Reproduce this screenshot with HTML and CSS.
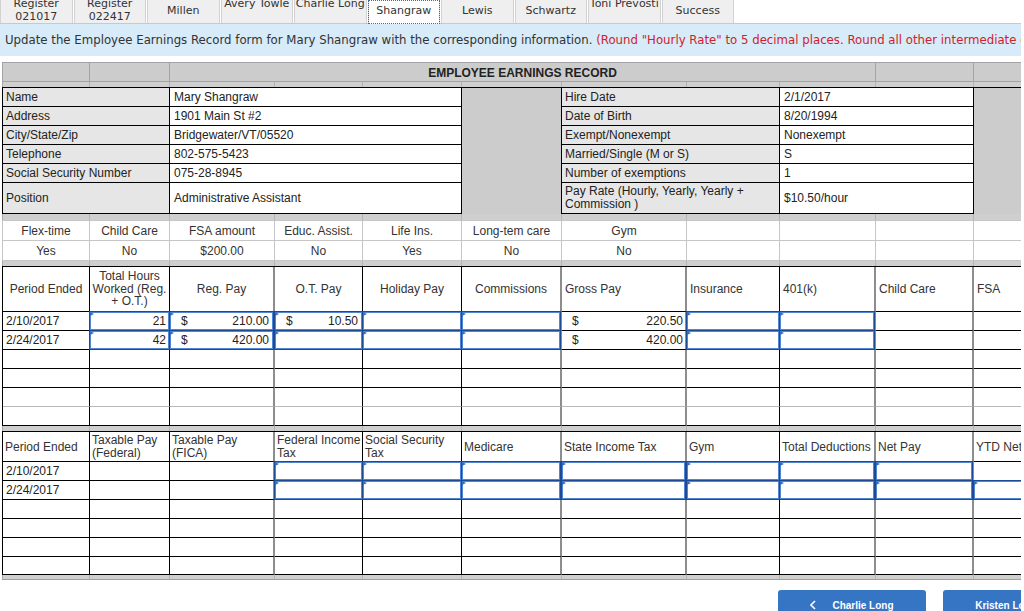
FILE: index.html
```html
<!DOCTYPE html>
<html lang="en">
<head>
<meta charset="utf-8">
<title>Employee Earnings Record</title>
<link rel="stylesheet" href="styles.css">
</head>
<body>
<div class="frame">
  <nav class="tabs">
    <div class="tab top"><span>Register<br>021017</span></div>
    <div class="tab top"><span>Register<br>022417</span></div>
    <div class="tab"><span>Millen</span></div>
    <div class="tab top"><span>Avery Towle</span></div>
    <div class="tab top"><span>Charlie Long</span></div>
    <div class="tab active"><span>Shangraw</span></div>
    <div class="tab"><span>Lewis</span></div>
    <div class="tab"><span>Schwartz</span></div>
    <div class="tab top"><span>Toni Prevosti</span></div>
    <div class="tab"><span>Success</span></div>
  </nav>

  <div class="note">Update the Employee Earnings Record form for Mary Shangraw with the corresponding information. <span class="warn">(Round "Hourly Rate" to 5 decimal places. Round all other intermediate calculations to 2 decimal places.)</span></div>

  <div class="sheet">
    <div class="grid title">
      <div class="cell"></div>
      <div class="cell"></div>
      <div class="cell head">EMPLOYEE EARNINGS RECORD</div>
      <div class="cell"></div>
      <div class="cell"></div>
    </div>

    <div class="grid band">
      <div class="cell"></div><div class="cell"></div><div class="cell"></div><div class="cell"></div><div class="cell"></div><div class="cell"></div><div class="cell"></div><div class="cell"></div><div class="cell"></div><div class="cell"></div><div class="cell"></div>
    </div>

    <div class="grid info">
      <div class="cell gapcol gap-f"></div>
      <div class="cell gapcol gap-k"></div>

      <div class="cell lab c-ab">Name</div>
      <div class="cell val c-ce">Mary Shangraw</div>
      <div class="cell lab c-gh">Hire Date</div>
      <div class="cell val c-ij">2/1/2017</div>

      <div class="cell lab c-ab">Address</div>
      <div class="cell val c-ce">1901 Main St #2</div>
      <div class="cell lab c-gh">Date of Birth</div>
      <div class="cell val c-ij">8/20/1994</div>

      <div class="cell lab c-ab">City/State/Zip</div>
      <div class="cell val c-ce">Bridgewater/VT/05520</div>
      <div class="cell lab c-gh">Exempt/Nonexempt</div>
      <div class="cell val c-ij">Nonexempt</div>

      <div class="cell lab c-ab">Telephone</div>
      <div class="cell val c-ce">802-575-5423</div>
      <div class="cell lab c-gh">Married/Single (M or S)</div>
      <div class="cell val c-ij">S</div>

      <div class="cell lab c-ab">Social Security Number</div>
      <div class="cell val c-ce">075-28-8945</div>
      <div class="cell lab c-gh">Number of exemptions</div>
      <div class="cell val c-ij">1</div>

      <div class="cell lab c-ab">Position</div>
      <div class="cell val c-ce">Administrative Assistant</div>
      <div class="cell lab c-gh wrap">Pay Rate (Hourly, Yearly, Yearly + Commission )</div>
      <div class="cell val c-ij">$10.50/hour</div>
    </div>

    <div class="grid band b6">
      <div class="cell"></div><div class="cell"></div><div class="cell"></div><div class="cell"></div><div class="cell"></div><div class="cell"></div><div class="cell"></div><div class="cell"></div><div class="cell"></div><div class="cell"></div><div class="cell"></div>
    </div>

    <div class="grid opts">
      <div class="cell">Flex-time</div>
      <div class="cell">Child Care</div>
      <div class="cell">FSA amount</div>
      <div class="cell">Educ. Assist.</div>
      <div class="cell">Life Ins.</div>
      <div class="cell">Long-tem care</div>
      <div class="cell">Gym</div>
      <div class="cell"></div><div class="cell"></div><div class="cell"></div><div class="cell"></div>

      <div class="cell">Yes</div>
      <div class="cell">No</div>
      <div class="cell">$200.00</div>
      <div class="cell">No</div>
      <div class="cell">Yes</div>
      <div class="cell">No</div>
      <div class="cell">No</div>
      <div class="cell"></div><div class="cell"></div><div class="cell"></div><div class="cell"></div>
    </div>

    <div class="grid band">
      <div class="cell"></div><div class="cell"></div><div class="cell"></div><div class="cell"></div><div class="cell"></div><div class="cell"></div><div class="cell"></div><div class="cell"></div><div class="cell"></div><div class="cell"></div><div class="cell"></div>
    </div>

    <div class="grid pay pay1">
      <div class="tr hdr">
        <div class="cell hc">Period Ended</div>
        <div class="cell hc wrap tight">Total Hours Worked (Reg. + O.T.)</div>
        <div class="cell hc">Reg. Pay</div>
        <div class="cell hc">O.T. Pay</div>
        <div class="cell hc">Holiday Pay</div>
        <div class="cell hc">Commissions</div>
        <div class="cell">Gross Pay</div>
        <div class="cell">Insurance</div>
        <div class="cell">401(k)</div>
        <div class="cell">Child Care</div>
        <div class="cell">FSA</div>
      </div>
      <div class="tr">
        <div class="cell">2/10/2017</div>
        <div class="cell inp num">21</div>
        <div class="cell inp money"><span>$</span><span>210.00</span></div>
        <div class="cell inp money"><span>$</span><span>10.50</span></div>
        <div class="cell inp"></div>
        <div class="cell inp"></div>
        <div class="cell money plain"><span>$</span><span>220.50</span></div>
        <div class="cell inp"></div>
        <div class="cell inp"></div>
        <div class="cell"></div>
        <div class="cell"></div>
      </div>
      <div class="tr">
        <div class="cell">2/24/2017</div>
        <div class="cell inp num">42</div>
        <div class="cell inp money"><span>$</span><span>420.00</span></div>
        <div class="cell inp"></div>
        <div class="cell inp"></div>
        <div class="cell inp"></div>
        <div class="cell money plain"><span>$</span><span>420.00</span></div>
        <div class="cell inp"></div>
        <div class="cell inp"></div>
        <div class="cell"></div>
        <div class="cell"></div>
      </div>
      <div class="tr">
        <div class="cell"></div><div class="cell"></div><div class="cell"></div><div class="cell"></div><div class="cell"></div><div class="cell"></div><div class="cell"></div><div class="cell"></div><div class="cell"></div><div class="cell"></div><div class="cell"></div>
      </div>
      <div class="tr">
        <div class="cell"></div><div class="cell"></div><div class="cell"></div><div class="cell"></div><div class="cell"></div><div class="cell"></div><div class="cell"></div><div class="cell"></div><div class="cell"></div><div class="cell"></div><div class="cell"></div>
      </div>
      <div class="tr soft">
        <div class="cell"></div><div class="cell"></div><div class="cell"></div><div class="cell"></div><div class="cell"></div><div class="cell"></div><div class="cell"></div><div class="cell"></div><div class="cell"></div><div class="cell"></div><div class="cell"></div>
      </div>
      <div class="tr">
        <div class="cell"></div><div class="cell"></div><div class="cell"></div><div class="cell"></div><div class="cell"></div><div class="cell"></div><div class="cell"></div><div class="cell"></div><div class="cell"></div><div class="cell"></div><div class="cell"></div>
      </div>
    </div>

    <div class="grid band">
      <div class="cell"></div><div class="cell"></div><div class="cell"></div><div class="cell"></div><div class="cell"></div><div class="cell"></div><div class="cell"></div><div class="cell"></div><div class="cell"></div><div class="cell"></div><div class="cell"></div>
    </div>

    <div class="grid pay pay2">
      <div class="tr hdr2">
        <div class="cell">Period Ended</div>
        <div class="cell wrap">Taxable Pay (Federal)</div>
        <div class="cell wrap">Taxable Pay (FICA)</div>
        <div class="cell wrap">Federal Income Tax</div>
        <div class="cell wrap">Social Security Tax</div>
        <div class="cell">Medicare</div>
        <div class="cell">State Income Tax</div>
        <div class="cell">Gym</div>
        <div class="cell">Total Deductions</div>
        <div class="cell">Net Pay</div>
        <div class="cell">YTD Net Pay</div>
      </div>
      <div class="tr">
        <div class="cell">2/10/2017</div>
        <div class="cell"></div>
        <div class="cell"></div>
        <div class="cell inp"></div>
        <div class="cell inp"></div>
        <div class="cell inp"></div>
        <div class="cell inp"></div>
        <div class="cell inp"></div>
        <div class="cell inp"></div>
        <div class="cell inp"></div>
        <div class="cell"></div>
      </div>
      <div class="tr">
        <div class="cell">2/24/2017</div>
        <div class="cell"></div>
        <div class="cell"></div>
        <div class="cell inp"></div>
        <div class="cell inp"></div>
        <div class="cell inp"></div>
        <div class="cell inp"></div>
        <div class="cell inp"></div>
        <div class="cell inp"></div>
        <div class="cell inp"></div>
        <div class="cell inp"></div>
      </div>
      <div class="tr">
        <div class="cell"></div><div class="cell"></div><div class="cell"></div><div class="cell"></div><div class="cell"></div><div class="cell"></div><div class="cell"></div><div class="cell"></div><div class="cell"></div><div class="cell"></div><div class="cell"></div>
      </div>
      <div class="tr">
        <div class="cell"></div><div class="cell"></div><div class="cell"></div><div class="cell"></div><div class="cell"></div><div class="cell"></div><div class="cell"></div><div class="cell"></div><div class="cell"></div><div class="cell"></div><div class="cell"></div>
      </div>
      <div class="tr">
        <div class="cell"></div><div class="cell"></div><div class="cell"></div><div class="cell"></div><div class="cell"></div><div class="cell"></div><div class="cell"></div><div class="cell"></div><div class="cell"></div><div class="cell"></div><div class="cell"></div>
      </div>
      <div class="tr">
        <div class="cell"></div><div class="cell"></div><div class="cell"></div><div class="cell"></div><div class="cell"></div><div class="cell"></div><div class="cell"></div><div class="cell"></div><div class="cell"></div><div class="cell"></div><div class="cell"></div>
      </div>
    </div>

    <div class="grid band last">
      <div class="cell"></div><div class="cell"></div><div class="cell"></div><div class="cell"></div><div class="cell"></div><div class="cell"></div><div class="cell"></div><div class="cell"></div><div class="cell"></div><div class="cell"></div><div class="cell"></div>
    </div>
  </div>

  <div class="nav">
    <div class="btn"><svg class="chev" width="6" height="10" viewBox="0 0 6 10"><polyline points="5,1 1,5 5,9" fill="none" stroke="#fff" stroke-width="1.6"/></svg><span>Charlie Long</span></div>
    <div class="btn"><span>Kristen Long</span><svg class="chev" width="6" height="10" viewBox="0 0 6 10"><polyline points="1,1 5,5 1,9" fill="none" stroke="#fff" stroke-width="1.6"/></svg></div>
  </div>
</div>
</body>
</html>
```

FILE: styles.css
```css
* { box-sizing: border-box; }
html, body { margin: 0; background: #fff; }

.frame { width: 1021px; height: 611px; overflow: hidden; }

/* tabs */
.tabs {
  display: flex;
  align-items: flex-start;
  height: 24px;
  border-bottom: 1px solid #c9c9c9;
  font-family: "DejaVu Sans", Verdana, sans-serif;
  font-size: 11px;
  line-height: 13px;
  color: #333;
}
.tab {
  flex: 0 0 72.5px;
  height: 23px;
  margin-right: 1px;
  display: flex;
  justify-content: center;
  background: #efefef;
  border-left: 1px solid #d2d2d2;
  border-right: 1px solid #d2d2d2;
  overflow: hidden;
  text-align: center;
  white-space: nowrap;
}
.tab span { margin-top: 4px; }
.tab.top span { margin-top: -3px; }
.tab.active {
  height: 24px;
  background: #fff;
  outline: 1px dotted #2f6cc8;
  outline-offset: -1px;
}

/* instruction bar */
.note {
  height: 32px;
  display: flex;
  align-items: center;
  padding-left: 5px;
  background: #d8ebf9;
  font-family: "DejaVu Sans", Verdana, sans-serif;
  font-size: 11.75px;
  color: #333;
  white-space: pre;
}
.note .warn { color: #d0222b; }

/* spreadsheet */
.sheet {
  margin: 6px 0 0 2px;
  width: 1071px;
  font-family: "Liberation Sans", Arial, sans-serif;
  font-size: 12px;
  color: #222;
}
.grid {
  display: grid;
  grid-template-columns: 87px 80px 105px 88px 99px 100px 125px 93px 96px 98px 98px;
}
.tr { display: contents; }
.cell {
  min-width: 0;
  display: flex;
  align-items: center;
  padding: 0 3px;
  border-right: 1px solid #000;
  border-bottom: 1px solid #000;
  white-space: nowrap;
  overflow: hidden;
}
.wrap { white-space: normal; line-height: 13px; }

/* title row */
.title {
  grid-template-rows: 19px;
  border-top: 1px solid #a3a3a3;
  border-left: 1px solid #a3a3a3;
  background: #cccccc;
}
.title .cell { border-color: #a3a3a3; }
.title .head { grid-column: 3 / 10; justify-content: center; font-weight: bold; padding-top: 1px; }

/* gray separator bands */
.band {
  grid-template-rows: 5px;
  border-left: 1px solid #a8a8a8;
  background: #cfcfcf;
}
.band .cell { border-right-color: #b3b3b3; border-bottom: 0; }
.band.b6 { grid-template-rows: 6px; }
.band.last { grid-template-rows: 4px; border-bottom: 1px solid #a0a0a0; }

/* employee info */
.info {
  grid-template-rows: repeat(5, 19px) 31px;
  border-top: 1px solid #000;
  border-left: 1px solid #000;
}
.lab { background: #e6e6e6; }
.val { background: #fff; padding-left: 4px; }
.gapcol { grid-row: 1 / 7; background: #cccccc; border-bottom: 0; }
.gap-f { grid-column: 6; }
.gap-k { grid-column: 11; border-right: 0; }
.c-ab { grid-column: 1 / 3; }
.c-ce { grid-column: 3 / 6; }
.c-gh { grid-column: 7 / 9; }
.c-ij { grid-column: 9 / 11; }

/* benefit options */
.opts {
  grid-template-rows: 20px 20px;
  border-top: 1px solid #c6c6c6;
  border-left: 1px solid #c6c6c6;
  color: #333;
}
.opts .cell { border-color: #c6c6c6; justify-content: center; }

/* payroll grids */
.pay { border-top: 1px solid #000; border-left: 1px solid #000; }
.pay1 { grid-template-rows: 45px repeat(6, 19px); }
.pay2 { grid-template-rows: 30px repeat(5, 19px) 18px; }
.pay .tr > .cell:nth-child(3),
.pay .tr > .cell:nth-child(6),
.pay .tr > .cell:nth-child(7),
.pay .tr > .cell:nth-child(9),
.pay .tr > .cell:nth-child(10) { border-right: 2px solid #8d8d8d; }
.pay .tr.soft > .cell { border-bottom-color: #b8b8b8; }

.hdr > .cell, .hdr2 > .cell { color: #333; }
.hc { justify-content: center; text-align: center; }
.tight { padding: 0 1px; line-height: 12.5px; }
.hdr2 > .cell { padding-left: 2px; padding-right: 0; }

.num { justify-content: flex-end; padding-right: 3px; }
.money { justify-content: space-between; padding-left: 11px; padding-right: 4px; }
.money.plain { padding-left: 10px; padding-right: 2px; }

/* highlighted answer cells */
.inp { position: relative; overflow: visible; }
.inp::before {
  content: "";
  position: absolute;
  inset: -1px;
  border: 1px solid #1c4b96;
  box-shadow: inset 0 0 0 1px #5286d3;
  pointer-events: none;
}
.inp::after {
  content: "";
  position: absolute;
  top: 0;
  left: 0;
  border-left: 4px solid #2f6fd0;
  border-top: 2.5px solid transparent;
  border-bottom: 2.5px solid transparent;
}

/* bottom navigation */
.nav {
  display: flex;
  gap: 17px;
  margin-top: 10px;
  padding-left: 778px;
}
.btn {
  flex: 0 0 148px;
  height: 30px;
  display: flex;
  align-items: center;
  justify-content: center;
  gap: 16px;
  border-radius: 3px;
  background: #3674c4;
  color: #fff;
  font-family: "Liberation Sans", Arial, sans-serif;
  font-size: 10px;
  font-weight: bold;
}
.chev { display: block; }
```
